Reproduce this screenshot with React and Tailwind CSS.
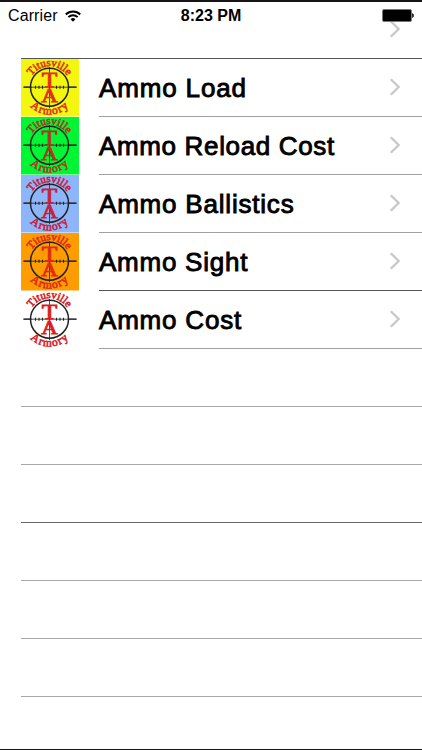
import React from "react";
import { clsx } from "clsx";

const ITEMS = [
  { id: "load", label: "Ammo Load", bg: "#f3f60f", ink: "#e0301c", tracking: "tracking-[0.85px]" },
  { id: "reload", label: "Ammo Reload Cost", bg: "#00f532", ink: "#a83a22", tracking: "tracking-[0.65px]" },
  { id: "ballistics", label: "Ammo Ballistics", bg: "#8db6fa", ink: "#c8203c", tracking: "tracking-[0.8px]" },
  { id: "sight", label: "Ammo Sight", bg: "#ff9c00", ink: "#e02a14", tracking: "tracking-[0.75px]", dark: true },
  { id: "cost", label: "Ammo Cost", bg: "#ffffff", ink: "#dc1c22", tracking: "tracking-[0.8px]" },
];

const EMPTY_ROWS = [
  { id: 1 },
  { id: 2 },
  { id: 3, dark: true },
  { id: 4 },
  { id: 5 },
  { id: 6 },
];

function WifiIcon() {
  return (
    <svg viewBox="0 0 16 12" className="h-3 w-4" fill="none" stroke="#000" strokeWidth="1.9">
      <path d="M0.8 4.5a10.2 10.2 0 0 1 14.4 0" />
      <path d="M3.4 7.2a6.5 6.5 0 0 1 9.2 0" />
      <path d="M8 11.7 5.6 9.3a3.4 3.4 0 0 1 4.8 0Z" fill="#000" stroke="none" />
    </svg>
  );
}

function BatteryIcon() {
  return (
    <svg viewBox="0 0 32 13" className="h-[13px] w-8">
      <rect x="0.5" y="0.5" width="29" height="12" rx="1.5" fill="#000" stroke="#777" />
      <path d="M30.5 4.5a2.4 2.4 0 0 1 0 4Z" fill="#000" stroke="#000" strokeWidth="0.6" />
    </svg>
  );
}

function Chevron() {
  return (
    <svg viewBox="0 0 12 18" className="mb-px h-[18px] w-3" fill="none" stroke="#c7c7cc" strokeWidth="2.3">
      <path d="M1.8 1.2 9.6 9l-7.8 7.8" />
    </svg>
  );
}

function ArmoryLogo({ id, bg, ink }) {
  return (
    <svg viewBox="0 0 58 58" className="block h-[58px] w-[58px] shrink-0">
      <defs>
        <path id={`top-${id}`} d="M7.5 28.2a21 21 0 0 1 42 0" />
        <path id={`bottom-${id}`} d="M1.2 28.2a27.3 27.3 0 0 0 54.6 0" />
      </defs>
      <rect width="58" height="57.5" fill={bg} />
      <g stroke="#222" fill="none">
        <circle cx="28.5" cy="28.2" r="19" strokeWidth="1.5" />
        <path d="M2.5 28.2h53M28.5 8v41" strokeWidth="0.8" />
        <path d="M2.5 28.2h8M47 28.2h8.5" strokeWidth="1.2" />
        <path d="M14.5 26.7v3M18 26.7v3M21.5 26.7v3M35.5 26.7v3M39 26.7v3M42.5 26.7v3" strokeWidth="1.1" />
      </g>
      <g fill={ink} stroke={ink} fontFamily="'Liberation Serif', serif" textAnchor="middle">
        <text x="28.5" y="27.7" fontSize="20" strokeWidth="0.8" textLength="15.5" lengthAdjust="spacingAndGlyphs">T</text>
        <text x="28.5" y="42.7" fontSize="19.5" strokeWidth="0.8" textLength="16.5" lengthAdjust="spacingAndGlyphs">A</text>
        <text fontSize="11" strokeWidth="0.6" letterSpacing="0">
          <textPath href={`#top-${id}`} startOffset="50%">Titusville</textPath>
        </text>
        <text fontSize="11.5" strokeWidth="0.6" letterSpacing="1.2">
          <textPath href={`#bottom-${id}`} startOffset="50.5%">Armory</textPath>
        </text>
      </g>
    </svg>
  );
}

function StatusBar() {
  return (
    <header className="absolute inset-x-0 top-0 grid h-[29px] grid-cols-3 items-center border-t-2 border-[#171418] pl-2 pr-2">
      <div className="flex items-center gap-[7px]">
        <span className="text-[16px] tracking-[0.1px]">Carrier</span>
        <WifiIcon />
      </div>
      <span className="text-center text-[16px] font-bold">8:23 PM</span>
      <div className="flex justify-end">
        <BatteryIcon />
      </div>
    </header>
  );
}

function MenuRow({ item }) {
  return (
    <li className="flex h-[58px]">
      <ArmoryLogo id={item.id} bg={item.bg} ink={item.ink} />
      <div
        className={clsx(
          "ml-5 flex grow items-center justify-between border-b pr-[21px]",
          item.dark ? "border-[#555]" : "border-[#a0a0a0]"
        )}
      >
        <span className={clsx("whitespace-nowrap text-[26px] leading-none [-webkit-text-stroke:0.9px_#000]", item.tracking)}>
          {item.label}
        </span>
        <Chevron />
      </div>
    </li>
  );
}

export default function App() {
  return (
    <div className="relative h-[750px] w-[422px] overflow-hidden border-b border-[#171418] bg-white font-['Liberation_Sans',sans-serif] text-black">
      <ul className="pl-[21px]">
        <li className="flex h-[59px] items-center justify-end border-b border-[#555] pr-[21px]">
          <Chevron />
        </li>
        {ITEMS.map((item) => (
          <MenuRow key={item.id} item={item} />
        ))}
        {EMPTY_ROWS.map((row) => (
          <li key={row.id} className={clsx("h-[58px] border-b", row.dark ? "border-[#666]" : "border-[#a8a8a8]")} />
        ))}
      </ul>
      <StatusBar />
    </div>
  );
}
